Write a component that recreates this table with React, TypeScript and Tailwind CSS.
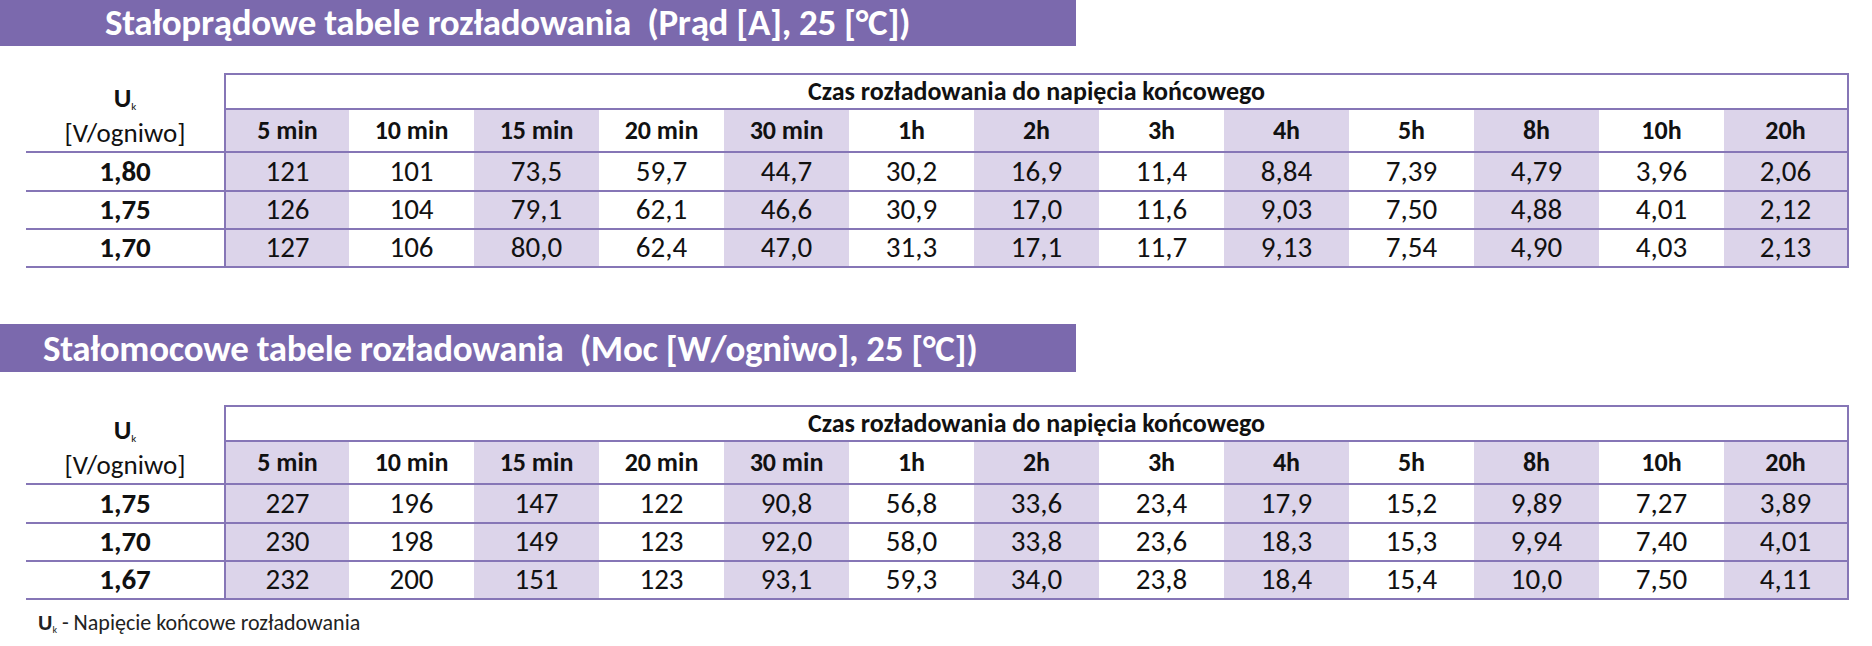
const cols = ["5 min", "10 min", "15 min", "20 min", "30 min", "1h", "2h", "3h", "4h", "5h", "8h", "10h", "20h"];

const currentRows = [
  { u: "1,80", v: ["121", "101", "73,5", "59,7", "44,7", "30,2", "16,9", "11,4", "8,84", "7,39", "4,79", "3,96", "2,06"] },
  { u: "1,75", v: ["126", "104", "79,1", "62,1", "46,6", "30,9", "17,0", "11,6", "9,03", "7,50", "4,88", "4,01", "2,12"] },
  { u: "1,70", v: ["127", "106", "80,0", "62,4", "47,0", "31,3", "17,1", "11,7", "9,13", "7,54", "4,90", "4,03", "2,13"] },
];

const powerRows = [
  { u: "1,75", v: ["227", "196", "147", "122", "90,8", "56,8", "33,6", "23,4", "17,9", "15,2", "9,89", "7,27", "3,89"] },
  { u: "1,70", v: ["230", "198", "149", "123", "92,0", "58,0", "33,8", "23,6", "18,3", "15,3", "9,94", "7,40", "4,01"] },
  { u: "1,67", v: ["232", "200", "151", "123", "93,1", "59,3", "34,0", "23,8", "18,4", "15,4", "10,0", "7,50", "4,11"] },
];

function TitleBar({ text, pad, className = "" }: { text: string; pad: string; className?: string }) {
  return (
    <div className={`flex h-[48px] w-[1076px] items-center bg-[#7b69ad] ${pad} ${className}`}>
      <span className="whitespace-pre text-[37px] font-bold leading-none tracking-[-0.3px] text-white">{text}</span>
    </div>
  );
}

function DischargeTable({ rows }: { rows: { u: string; v: string[] }[] }) {
  const line = "border-[#8676b6]";
  return (
    <div className="ml-[26px] grid grid-cols-[198px_repeat(13,125px)] grid-rows-[37px_43px_39px_38px_38px] text-[#111]">
      {/* U_k header spans two rows */}
      <div className={`row-span-2 flex flex-col items-center justify-center border-b-2 ${line} pt-[6px] text-[27px] leading-[35px]`}>
        <span className="font-semibold">
          U<sub className="text-[11px] font-normal">k</sub>
        </span>
        <span>[V/ogniwo]</span>
      </div>
      <div className={`col-span-13 flex items-center justify-center border-2 ${line} text-[26px] font-bold`}>
        Czas rozładowania do napięcia końcowego
      </div>
      {cols.map((c, i) => (
        <div
          key={c}
          className={`flex items-center justify-center border-b-2 ${line} text-[26px] font-bold ${i % 2 === 0 ? "bg-[#dcd4ea]" : "bg-white"} ${i === 0 ? "border-l-2" : ""} ${i === 12 ? "border-r-2" : ""}`}
        >
          {c}
        </div>
      ))}
      {rows.map((r) => (
        <>
          <div key={r.u} className={`flex items-center justify-center border-b-2 ${line} text-[29px] font-bold`}>
            {r.u}
          </div>
          {r.v.map((val, i) => (
            <div
              key={r.u + i}
              className={`flex items-center justify-center border-b-2 ${line} text-[29px] ${i % 2 === 0 ? "bg-[#dcd4ea]" : "bg-white"} ${i === 0 ? "border-l-2" : ""} ${i === 12 ? "border-r-2" : ""}`}
            >
              {val}
            </div>
          ))}
        </>
      ))}
    </div>
  );
}

export default function App() {
  return (
    <div className="h-[646px] w-[1872px] overflow-hidden bg-white [font-family:Carlito,Lato,sans-serif]">
      <TitleBar text="Stałoprądowe tabele rozładowania  (Prąd [A], 25 [°C])" pad="pl-[105px]" className="mt-[-2px]" />
      <div className="mt-[27px]">
        <DischargeTable rows={currentRows} />
      </div>
      <TitleBar text="Stałomocowe tabele rozładowania  (Moc [W/ogniwo], 25 [°C])" pad="pl-[43px]" className="mt-[56px]" />
      <div className="mt-[33px]">
        <DischargeTable rows={powerRows} />
      </div>
      <div className="ml-[38px] mt-[6px] text-[22px] text-[#222]">
        <span className="font-bold">U</span>
        <sub className="text-[10px]">k</sub> - Napięcie końcowe rozładowania
      </div>
    </div>
  );
}
